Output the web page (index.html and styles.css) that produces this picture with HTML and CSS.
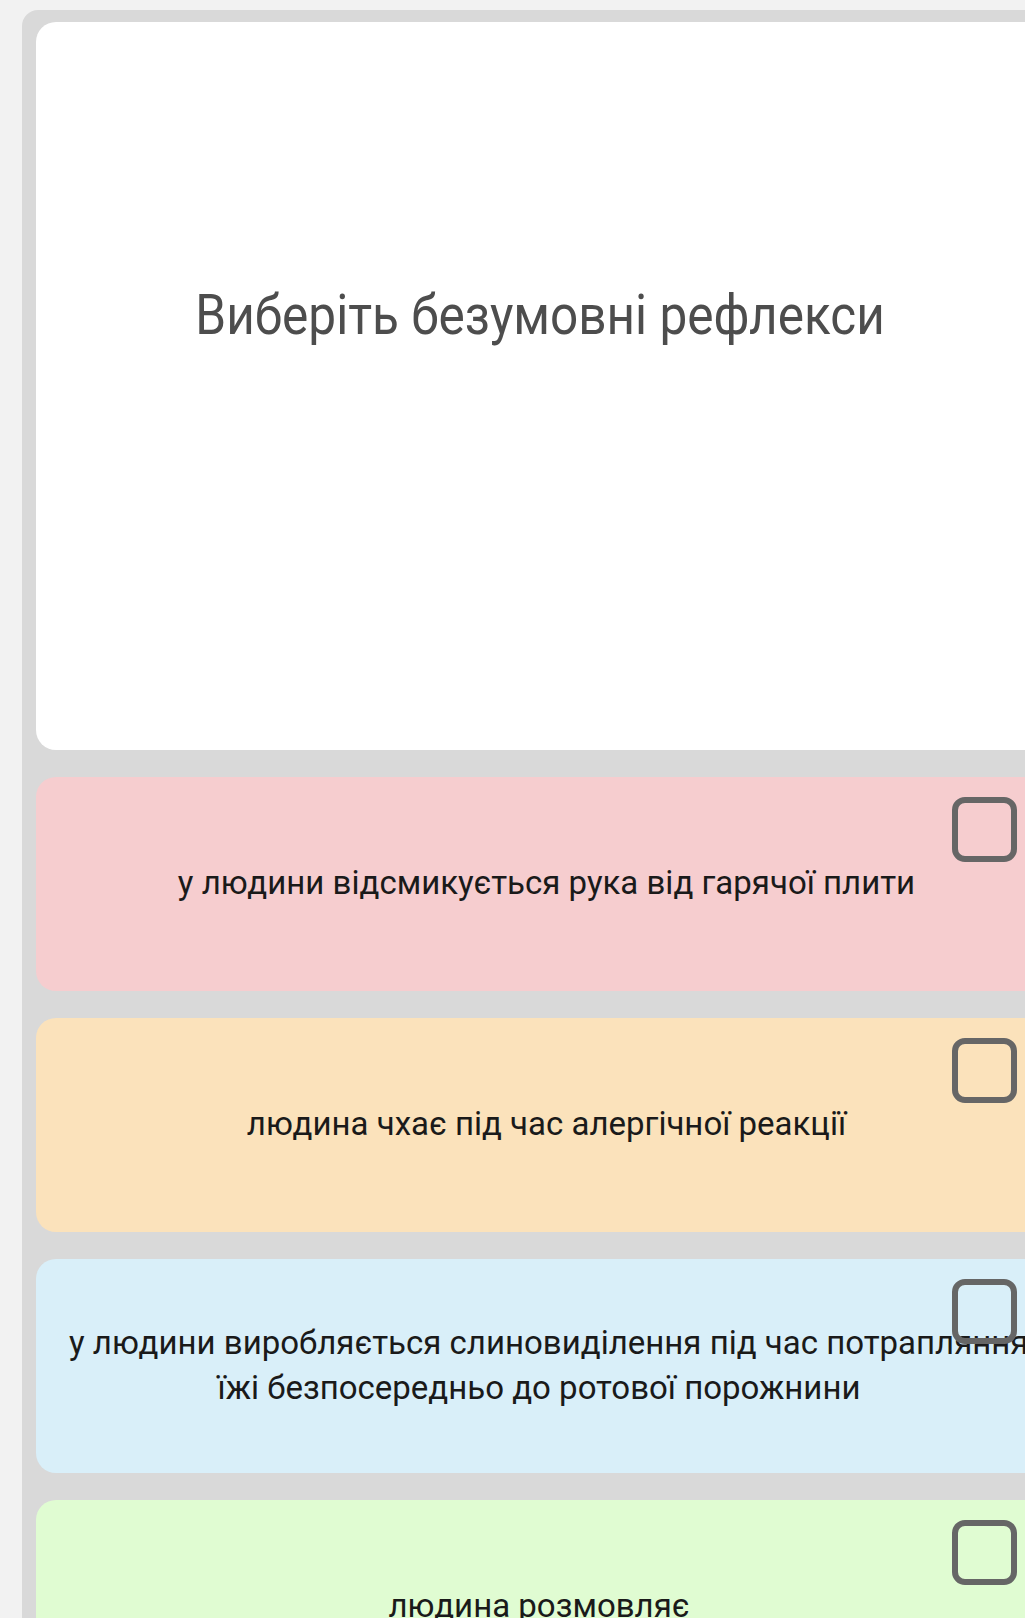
FILE: index.html
```html
<!DOCTYPE html>
<html lang="uk">
<head>
<meta charset="utf-8">
<title>Вікторина</title>
<link rel="stylesheet" href="styles.css">
</head>
<body>
<div class="panel">
  <div class="question">
    <h1 class="question-text">Виберіть безумовні рефлекси</h1>
  </div>
  <div class="option option-pink option-short">
    <span class="check"></span>
    <p class="option-text">у людини відсмикується рука від гарячої плити</p>
  </div>
  <div class="option option-orange option-short">
    <span class="check"></span>
    <p class="option-text">людина чхає під час алергічної реакції</p>
  </div>
  <div class="option option-blue">
    <span class="check"></span>
    <p class="option-text">у людини виробляється слиновиділення під час потрапляння<br>їжі безпосередньо до ротової порожнини</p>
  </div>
  <div class="option option-green">
    <span class="check"></span>
    <p class="option-text">людина розмовляє</p>
  </div>
</div>
</body>
</html>
```

FILE: styles.css
```css
html, body {
  margin: 0;
  padding: 0;
  overflow: hidden;
  background: #f2f2f2;
  font-family: Roboto, "Noto Sans", sans-serif;
}

.panel {
  margin: 10px 0 0 22px;
  width: 1036px;
  box-sizing: border-box;
  background: #d9d9d9;
  border-radius: 16px 16px 0 0;
  padding: 12px 14px 40px 14px;
  display: flex;
  flex-direction: column;
  gap: 27px;
}

.question {
  height: 728px;
  background: #ffffff;
  border-radius: 20px;
  display: flex;
  justify-content: center;
  align-items: flex-start;
  padding-top: 263px;
  box-sizing: border-box;
}

.question-text {
  margin: 0;
  font-weight: 400;
  font-size: 55px;
  line-height: 60px;
  color: #4d4d4d;
  text-align: center;
  white-space: nowrap;
  transform: scaleX(0.9);
}

.option {
  position: relative;
  height: 214px;
  border-radius: 20px;
  display: flex;
  align-items: center;
  padding: 0 35px 3px 33px;
  box-sizing: border-box;
}

.option-short {
  padding-right: 20px;
}

.option-pink { background: #f6cdcf; }
.option-orange { background: #fbe2bb; }
.option-blue { background: #d9eff9; }
.option-green { background: #e0fcd2; }

.option-text {
  flex: 1;
  min-width: 0;
  margin: 0;
  font-size: 33px;
  line-height: 45px;
  color: #1a1a1a;
  text-align: center;
  white-space: nowrap;
}

.check {
  position: absolute;
  top: 20px;
  right: 27px;
  width: 65px;
  height: 65px;
  box-sizing: border-box;
  border: 6px solid #666666;
  border-radius: 13px;
  z-index: 1;
}
```
